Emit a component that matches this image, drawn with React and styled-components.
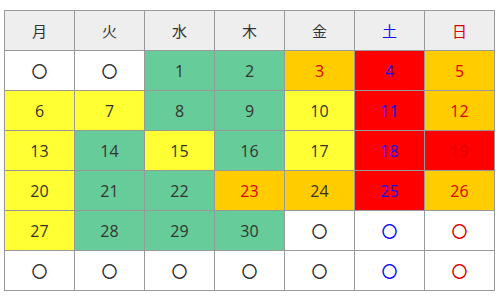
import React from "react";
import styled, { createGlobalStyle } from "styled-components";

const GlobalStyle = createGlobalStyle`
  html, body {
    margin: 0;
    padding: 0;
    background: #fff;
  }
  body {
    font-family: "Open Sans", "Noto Sans CJK JP", sans-serif;
  }
`;

const days = [
  { label: "月", tone: "plain" },
  { label: "火", tone: "plain" },
  { label: "水", tone: "plain" },
  { label: "木", tone: "plain" },
  { label: "金", tone: "plain" },
  { label: "土", tone: "sat" },
  { label: "日", tone: "sun" },
];

// each cell: [text, background, text tone override]
const weeks = [
  [["○", "none"], ["○", "none"], ["1", "green"], ["2", "green"], ["3", "orange", "sun"], ["4", "red"], ["5", "orange"]],
  [["6", "yellow"], ["7", "yellow"], ["8", "green"], ["9", "green"], ["10", "yellow"], ["11", "red"], ["12", "orange"]],
  [["13", "yellow"], ["14", "green"], ["15", "yellow"], ["16", "green"], ["17", "yellow"], ["18", "red"], ["19", "red"]],
  [["20", "yellow"], ["21", "green"], ["22", "green"], ["23", "orange", "sun"], ["24", "orange"], ["25", "red"], ["26", "orange"]],
  [["27", "yellow"], ["28", "green"], ["29", "green"], ["30", "green"], ["○", "none"], ["○", "none"], ["○", "none"]],
  [["○", "none"], ["○", "none"], ["○", "none"], ["○", "none"], ["○", "none"], ["○", "none"], ["○", "none"]],
];

const backgrounds = {
  none: "#ffffff",
  green: "#66cc99",
  yellow: "#ffff33",
  orange: "#ffcc00",
  red: "#ff0000",
};

const inks = {
  plain: "#333333",
  sat: "#1111ee",
  sun: "#dd0000",
};

export default function App() {
  return (
    <Page>
      <GlobalStyle />
      <Calendar>
        <thead>
          <tr>
            {days.map((day) => (
              <HeadCell key={day.label} tone={day.tone}>
                {day.label}
              </HeadCell>
            ))}
          </tr>
        </thead>
        <tbody>
          {weeks.map((week, row) => (
            <tr key={row}>
              {week.map(([text, bg, tone], col) => (
                <DayCell key={col} bg={bg} tone={tone || days[col].tone}>
                  {text === "○" ? <Blank>{text}</Blank> : text}
                </DayCell>
              ))}
            </tr>
          ))}
        </tbody>
      </Calendar>
    </Page>
  );
}

const Page = styled.div`
  padding: 10px 4px;
`;

const Calendar = styled.table`
  border-collapse: collapse;
  table-layout: fixed;
  width: 491px;
`;

const HeadCell = styled.th`
  height: 39px;
  padding: 0;
  border: 1px solid #999999;
  background: #eeeeee;
  color: ${(p) => inks[p.tone]};
  font-family: "Noto Sans CJK JP", sans-serif;
  font-size: 15px;
  font-weight: 400;
  text-align: center;
  vertical-align: middle;
`;

const DayCell = styled.td`
  height: 39px;
  padding: 0;
  border: 1px solid #999999;
  background: ${(p) => backgrounds[p.bg]};
  color: ${(p) => inks[p.tone]};
  font-size: 16px;
  text-align: center;
  vertical-align: middle;
`;

const Blank = styled.span`
  font-family: "Noto Sans CJK JP", sans-serif;
  font-size: 15px;
  -webkit-text-stroke: 0.7px currentColor;
`;
